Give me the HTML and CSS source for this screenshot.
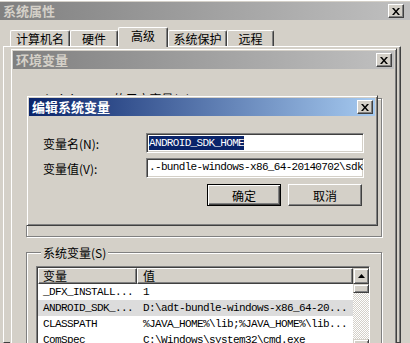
FILE: index.html
```html
<!DOCTYPE html>
<html lang="zh-CN">

<head>
    <meta charset="UTF-8">
    <meta name="viewport" content="width=device-width, initial-scale=1.0">
    <title>系统属性</title>
    <link rel="stylesheet" href="styles.css">
</head>

<body>

    <div class="sys-window">
        <div class="titlebar inactive">
            <span class="title">系统属性</span>
            <span class="close-btn"><svg width="8" height="7" viewBox="0 0 8 7"><path d="M0 0h2l2 2.4L6 0h2L5 3.5 8 7H6L4 4.6 2 7H0l3-3.5z"/></svg></span>
        </div>

        <div class="sys-body">
            <div class="tabs">
                <div class="tab tab-computer">计算机名</div>
                <div class="tab tab-hardware">硬件</div>
                <div class="tab tab-advanced active">高级</div>
                <div class="tab tab-protect">系统保护</div>
                <div class="tab tab-remote">远程</div>
            </div>
            <div class="tab-panel"></div>
        </div>

        <!-- 环境变量 窗口 -->
        <div class="env-window">
            <div class="titlebar inactive">
                <span class="title">环境变量</span>
                <span class="close-btn"><svg width="8" height="7" viewBox="0 0 8 7"><path d="M0 0h2l2 2.4L6 0h2L5 3.5 8 7H6L4 4.6 2 7H0l3-3.5z"/></svg></span>
            </div>
            <div class="env-body">
                <div class="group user-group">
                    <span class="group-label">Administrator 的用户变量(U)</span>
                </div>

                <div class="group sys-group">
                    <span class="group-label">系统变量(S)</span>
                    <div class="listview">
                        <div class="lv-main">
                            <div class="lv-header">
                                <span class="col-name">变量</span>
                                <span class="col-value">值</span>
                            </div>
                            <div class="lv-row">
                                <span class="col-name">_DFX_INSTALL...</span>
                                <span class="col-value">1</span>
                            </div>
                            <div class="lv-row selected">
                                <span class="col-name">ANDROID_SDK_...</span>
                                <span class="col-value">D:\adt-bundle-windows-x86_64-20...</span>
                            </div>
                            <div class="lv-row">
                                <span class="col-name">CLASSPATH</span>
                                <span class="col-value">%JAVA_HOME%\lib;%JAVA_HOME%\lib...</span>
                            </div>
                            <div class="lv-row">
                                <span class="col-name">ComSpec</span>
                                <span class="col-value">C:\Windows\system32\cmd.exe</span>
                            </div>
                        </div>
                        <div class="scrollbar">
                            <span class="sb-btn"><svg width="7" height="4" viewBox="0 0 7 4"><path d="M3.5 0L7 4H0z"/></svg></span>
                            <span class="sb-thumb"></span>
                            <span class="sb-track"></span>
                            <span class="sb-btn"><svg width="7" height="4" viewBox="0 0 7 4"><path d="M0 0h7L3.5 4z"/></svg></span>
                        </div>
                    </div>
                </div>
            </div>
        </div>

        <!-- 编辑系统变量 对话框 -->
        <div class="edit-dialog">
            <div class="titlebar active">
                <span class="title">编辑系统变量</span>
                <span class="close-btn"><svg width="8" height="7" viewBox="0 0 8 7"><path d="M0 0h2l2 2.4L6 0h2L5 3.5 8 7H6L4 4.6 2 7H0l3-3.5z"/></svg></span>
            </div>
            <div class="dialog-body">
                <div class="form-row">
                    <label class="field-label">变量名(N):</label>
                    <div class="field"><span class="sel">ANDROID_SDK_HOME</span></div>
                </div>
                <div class="form-row">
                    <label class="field-label">变量值(V):</label>
                    <div class="field">.-bundle-windows-x86_64-20140702\sdk</div>
                </div>
                <div class="buttons">
                    <button class="btn default">确定</button>
                    <button class="btn">取消</button>
                </div>
            </div>
        </div>
    </div>

</body>

</html>
```

FILE: styles.css
```css
* {
    box-sizing: border-box;
}

body {
    margin: 0;
    width: 410px;
    height: 343px;
    overflow: hidden;
    background-color: #d4d0c8;
    font-family: "Noto Sans CJK SC", sans-serif;
    font-size: 12px;
    color: #000;
}

.sys-window {
    position: relative;
    width: 410px;
    height: 343px;
    padding-top: 2px;
    box-shadow: inset 0 1px 0 #fff;
}

/* 标题栏 */
.titlebar {
    display: flex;
    align-items: center;
    justify-content: space-between;
    height: 18px;
    padding: 0 2px 0 3px;
}

.titlebar .title {
    font-size: 13px;
    font-weight: bold;
    line-height: 18px;
}

.titlebar.inactive {
    background: linear-gradient(to right, #808080, #c0c0c0);
    color: #d4d0c8;
}

.titlebar.active {
    background: linear-gradient(to right, #0a246a, #a6caf0);
    color: #fff;
}

.sys-window > .titlebar {
    padding-right: 6px;
}

.close-btn {
    display: flex;
    align-items: center;
    justify-content: center;
    width: 16px;
    height: 14px;
    background-color: #d4d0c8;
    border: 1px solid;
    border-color: #fff #404040 #404040 #fff;
    box-shadow: inset -1px -1px 0 #808080;
}

/* 选项卡 */
.sys-body {
    display: flex;
    flex-direction: column;
    height: 323px;
    padding: 7px 9px 0 3px;
}

.tabs {
    display: flex;
    align-items: flex-end;
    height: 19px;
    padding-left: 7px;
}

.tab {
    height: 16px;
    line-height: 15px;
    text-align: center;
    border: 1px solid;
    border-bottom: none;
    border-color: #fff #404040 #404040 #fff;
    border-radius: 2px 2px 0 0;
    box-shadow: inset -1px 0 0 #808080;
}

.tab-computer { width: 60px; }
.tab-hardware { width: 48px; }
.tab-advanced { width: 50px; }
.tab-protect { width: 59px; }
.tab-remote { width: 47px; }

.tab.active {
    position: relative;
    height: 20px;
    line-height: 15px;
    margin-bottom: -1px;
    background-color: #d4d0c8;
}

.tab-panel {
    flex: 1;
    border: 1px solid;
    border-color: #fff #404040 #404040 #fff;
    box-shadow: inset -1px 0 0 #808080;
}

/* 窗口 */
.env-window,
.edit-dialog {
    position: absolute;
    background-color: #d4d0c8;
    border: 1px solid;
    border-color: #d4d0c8 #404040 #404040 #d4d0c8;
    box-shadow: inset 1px 1px 0 #fff, inset -1px -1px 0 #808080;
    padding: 2px;
}

.env-window {
    left: 10px;
    top: 48px;
    width: 387px;
    height: 320px;
}

.env-body {
    padding: 29px 12px 0 13px;
}

.group {
    border: 1px solid #808080;
    box-shadow: inset 1px 1px 0 #fff, 1px 1px 0 #fff;
}

.group-label {
    display: table;
    margin: -7px 0 0 5px;
    padding: 0 2px;
    line-height: 14px;
    background-color: #d4d0c8;
}

.user-group {
    height: 139px;
}

.sys-group {
    height: 120px;
    margin-top: 15px;
    padding: 0 11px 0 9px;
}

/* 列表 */
.listview {
    display: flex;
    margin-top: 6px;
    height: 90px;
    background-color: #fff;
    border: 1px solid;
    border-color: #808080 #fff #fff #808080;
    box-shadow: inset 1px 1px 0 #404040;
    padding: 1px 0 0 1px;
}

.lv-main {
    flex: 1;
}

.lv-header {
    display: flex;
    height: 16px;
    line-height: 14px;
    background-color: #d4d0c8;
}

.lv-header span {
    border: 1px solid;
    border-color: #fff #404040 #404040 #fff;
    box-shadow: inset -1px -1px 0 #808080;
}

.lv-header .col-name {
    width: 99px;
    padding-left: 4px;
}

.lv-header .col-value {
    flex: 1;
    padding-left: 5px;
}

.lv-row {
    display: flex;
    height: 16px;
    line-height: 16px;
    font-family: "Liberation Mono", "Noto Sans CJK SC", monospace;
    font-size: 11px;
    letter-spacing: -0.6px;
    white-space: nowrap;
}

.lv-row .col-name {
    width: 99px;
    padding-left: 5px;
}

.lv-row .col-value {
    padding-left: 6px;
}

.lv-row.selected {
    background-color: #dcdcdc;
}

.scrollbar {
    display: flex;
    flex-direction: column;
    width: 16px;
}

.sb-btn,
.sb-thumb {
    display: flex;
    align-items: center;
    justify-content: center;
    height: 16px;
    background-color: #d4d0c8;
    border: 1px solid;
    border-color: #d4d0c8 #404040 #404040 #d4d0c8;
    box-shadow: inset 1px 1px 0 #fff, inset -1px -1px 0 #808080;
}

.sb-thumb {
    height: 9px;
}

.sb-track {
    flex: 1;
    background: repeating-conic-gradient(#d4d0c8 0 25%, #fff 0 50%) 0 0 / 2px 2px;
}

/* 编辑对话框 */
.edit-dialog {
    left: 26px;
    top: 95px;
    width: 352px;
    height: 131px;
}

.dialog-body {
    padding: 17px 11px 0 14px;
}

.form-row {
    display: flex;
    align-items: center;
    margin-bottom: 5px;
}

.field-label {
    width: 103px;
}

.field {
    flex: 1;
    height: 20px;
    padding: 2px 0 0 2px;
    line-height: 13px;
    background-color: #fff;
    border: 1px solid;
    border-color: #808080 #fff #fff #808080;
    box-shadow: inset 1px 1px 0 #404040, inset -1px -1px 0 #d4d0c8;
    font-family: "Liberation Mono", monospace;
    font-size: 11px;
    letter-spacing: -0.66px;
    white-space: nowrap;
    overflow: hidden;
}

.field .sel {
    display: inline-block;
    background-color: #0a246a;
    color: #fff;
    padding-top: 1px;
}

.buttons {
    display: flex;
    justify-content: flex-end;
    gap: 7px;
    margin-top: 6px;
    margin-right: 2px;
}

.btn {
    width: 74px;
    height: 22px;
    padding: 0;
    font-family: "Noto Sans CJK SC", sans-serif;
    font-size: 12px;
    color: #000;
    background-color: #d4d0c8;
    border: 1px solid;
    border-color: #fff #404040 #404040 #fff;
    box-shadow: inset -1px -1px 0 #808080;
}

.btn.default {
    border-color: #000;
    box-shadow: inset 1px 1px 0 #fff, inset -1px -1px 0 #404040, inset -2px -2px 0 #808080;
}
```
